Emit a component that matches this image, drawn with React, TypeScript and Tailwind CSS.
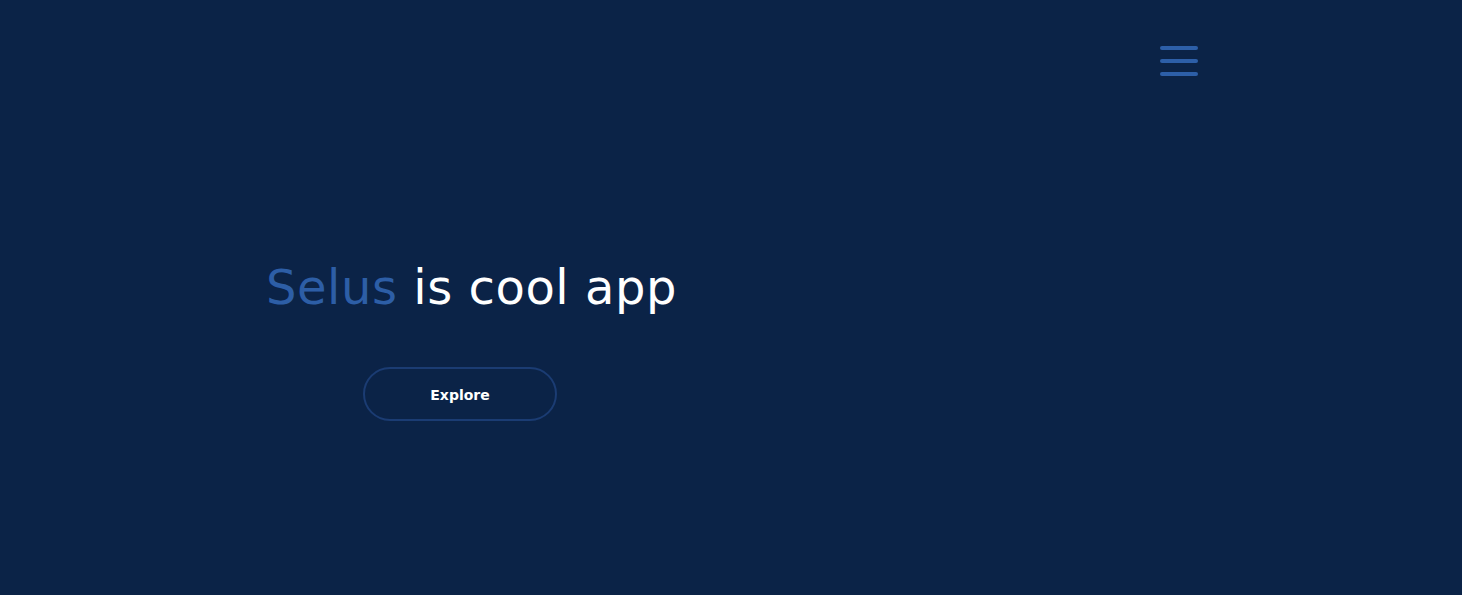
const App = () => {
  return (
    <div
      className="min-h-[595px] w-full bg-[#0b2347] px-[264px]"
      style={{ fontFamily: '"DejaVu Sans", "Open Sans", sans-serif' }}
    >
      <header className="flex justify-end pt-[46px]">
        <button className="flex flex-col gap-[9.5px]" aria-label="menu">
          <span className="block h-[3.5px] w-[38px] rounded-full bg-[#2d5fa8]" />
          <span className="block h-[3.5px] w-[38px] rounded-full bg-[#2d5fa8]" />
          <span className="block h-[3.5px] w-[38px] rounded-full bg-[#2d5fa8]" />
        </button>
      </header>

      <section className="flex flex-col items-start pl-[2px] pt-[183px]">
        <h1 className="text-[48px] leading-[56px] font-normal tracking-[0.55px] text-white">
          <span className="text-[#2d5ea6]">Selus</span> is cool app
        </h1>
        <button className="ml-[97px] mt-[52px] h-[54px] w-[194px] rounded-full border-2 border-[#1b3c73] pt-[3px] text-[14px] font-bold text-white">
          Explore
        </button>
      </section>
    </div>
  );
};

export default App;
